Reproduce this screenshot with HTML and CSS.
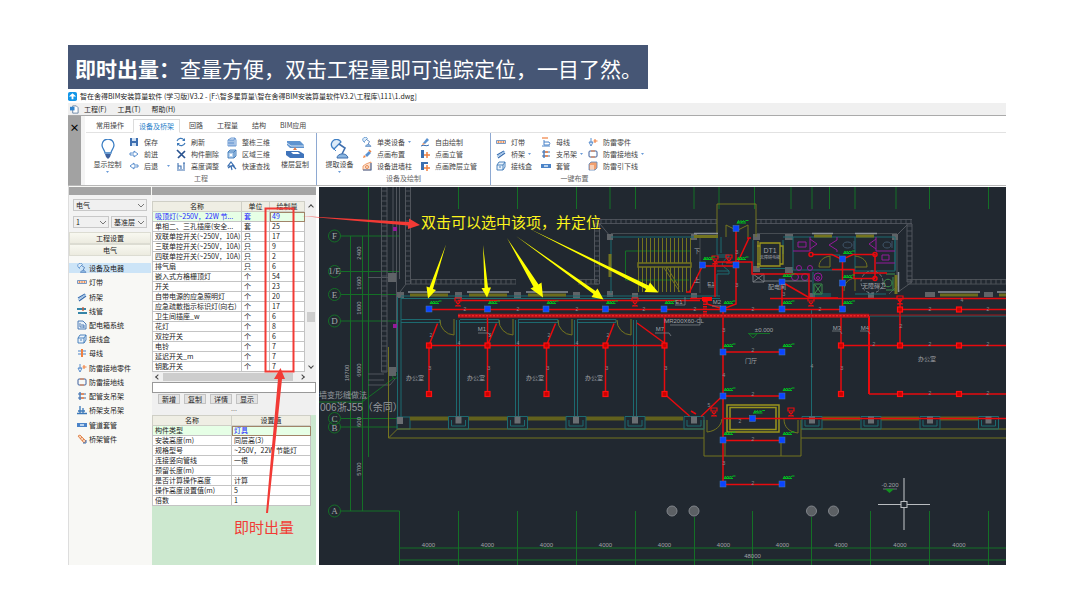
FILE: index.html
```html
<!DOCTYPE html>
<html lang="zh-CN">
<head>
<meta charset="utf-8">
<title>即时出量</title>
<link rel="stylesheet" href="styles.css">
</head>
<body>
<svg class="defs" aria-hidden="true">
  <defs>
    <symbol id="i-bulb" viewBox="0 0 20 20"><path d="M7 14c0-3-3-4-3-8a6 6 0 0 1 12 0c0 4-3 5-3 8z" fill="#fff" stroke="#3d7fc4" stroke-width="1.3"/><path d="M7 15h6l-1 3-2 2-2-2z" fill="#3c5f9c"/></symbol>
    <symbol id="i-floors" viewBox="0 0 20 20"><path d="M2 2h13l4 4v3H5L2 6z" fill="#5f93cf"/><path d="M2 4l4 3h13" fill="none" stroke="#cfe0f2"/><path d="M10 8l-2 3h4z" fill="#e08050"/><path d="M1 12h13l5 3v4H5l-4-3z" fill="#3f74bb"/><path d="M6 13h7l2 2H8z" fill="#fff"/></symbol>
    <symbol id="i-lamp" viewBox="0 0 20 20"><path d="M2 8a5 5 0 0 1 9-5L4 10z" fill="#dcebf8" stroke="#3f7fc4" stroke-width="1.3"/><path d="M9 5l6 4-3 6" fill="none" stroke="#3f6fae" stroke-width="1.6"/><path d="M7 19c0-5 10-6 11 0z" fill="#8bb6e0" stroke="#3f6fae"/><path d="M4 10l2 2" stroke="#3f7fc4"/></symbol>
    <symbol id="i-save" viewBox="0 0 10 10"><path d="M1 1h8v8H1z" fill="#3e6fb0"/><path d="M3 1h4v3H3zM3 6h4v3H3z" fill="#cfe0f3"/></symbol>
    <symbol id="i-fwd" viewBox="0 0 10 10"><path d="M1 4h4V2l4 3-4 3V6H1z" fill="#fff" stroke="#4b83c8" stroke-width=".9"/></symbol>
    <symbol id="i-back" viewBox="0 0 10 10"><path d="M9 4H5V2L1 5l4 3V6h4z" fill="#fff" stroke="#4b83c8" stroke-width=".9"/></symbol>
    <symbol id="i-refresh" viewBox="0 0 10 10"><path d="M1 4a4 4 0 0 1 7-1M9 6a4 4 0 0 1-7 1" fill="none" stroke="#3c78b8" stroke-width="1.1"/><path d="M9 1v3H6zM1 9V6h3z" fill="#3c78b8"/></symbol>
    <symbol id="i-delete" viewBox="0 0 10 10"><path d="M1 1l8 8M9 2L2 9" stroke="#28528f" stroke-width="1.7"/></symbol>
    <symbol id="i-height" viewBox="0 0 10 10"><path d="M1 9h8M2 2v6M2 5h3v3M8 2v6M7 2h2" fill="none" stroke="#3c6fb0" stroke-width="1.1"/></symbol>
    <symbol id="i-building" viewBox="0 0 10 10"><path d="M1 3l3-2h4l1 2v6H1zM1 3h6v6M7 3l1-2M3 3v6M5 3v6M1 6h6" fill="#e4effa" stroke="#4b83c8" stroke-width=".8"/></symbol>
    <symbol id="i-cube" viewBox="0 0 10 10"><path d="M1 3l2-2h6v6L7 9H1zM1 3h6v6M7 3l2-2" fill="#b9d3ee" stroke="#3c78b8" stroke-width=".9"/><path d="M3 5h2v2H3z" fill="#fff"/></symbol>
    <symbol id="i-find" viewBox="0 0 10 10"><path d="M4 1l3 4H1zM5 4l4 4M1 7l3-2 1 4" fill="none" stroke="#3c6fb0" stroke-width="1.2"/></symbol>
    <symbol id="i-dot" viewBox="0 0 10 10"><path d="M3 6l4-4 2 2-4 4z" fill="#5a91cf"/><path d="M1 9l1-3 2 2z" fill="#f08040"/><path d="M7 1l2 2" stroke="#f08040" stroke-width="1.4"/></symbol>
    <symbol id="i-wall" viewBox="0 0 10 10"><path d="M1 9V5l3-2 5-2v8z" fill="#fde2cf" stroke="#e88a52" stroke-width=".8"/><path d="M1 9h8V2" fill="none" stroke="#3c6fb0" stroke-width="1.1"/><circle cx="5" cy="6" r="1.5" fill="none" stroke="#e88a52"/></symbol>
    <symbol id="i-pen" viewBox="0 0 10 10"><path d="M3 6l4-5 2 2-4 4z" fill="#5a91cf"/><path d="M2 8l1-2 2 1z" fill="#f08040"/><path d="M1 9c3-2 5 1 8-1" fill="none" stroke="#3c6fb0"/></symbol>
    <symbol id="i-riser" viewBox="0 0 10 10"><path d="M1 1h3v8H1z" fill="#3c6fb0"/><path d="M7 3v6M4 6h6" stroke="#f08040" stroke-width="1.5"/></symbol>
    <symbol id="i-riser2" viewBox="0 0 10 10"><path d="M1 1h3v8H1zM4 1h4v2H4z" fill="#3c6fb0"/><path d="M7 4v6M4 7h6" stroke="#f08040" stroke-width="1.5"/></symbol>
    <symbol id="i-strip" viewBox="0 0 10 10"><path d="M.5 3.500h9v3h-9z" fill="#fbd3b8" stroke="#5a86bd" stroke-width=".8"/><path d="M2 5h1M4.500 5h1M7 5h1" stroke="#e07a3c" stroke-width="1.400"/></symbol>
    <symbol id="i-tray" viewBox="0 0 10 10"><path d="M1 6l7-4M2 9l7-5" stroke="#3c6fb0" stroke-width="1.400"/><path d="M1 7.500l8-5" stroke="#9cc0e6" stroke-width="1.200"/></symbol>
    <symbol id="i-box" viewBox="0 0 10 10"><path d="M1 4l2-3h6v5L7 9H1zM1 4h6v5M7 4l2-3M3 6h2" fill="#eaf3fb" stroke="#3c78b8" stroke-width=".9"/></symbol>
    <symbol id="i-bus" viewBox="0 0 10 10"><path d="M1 1h6" stroke="#f08040" stroke-width="1.200"/><path d="M3 3v5h5a2 2 0 0 0 0-3H3M1 9h8" fill="none" stroke="#4b83c8" stroke-width="1"/></symbol>
    <symbol id="i-hanger" viewBox="0 0 10 10"><path d="M3 1v8" stroke="#3c6fb0" stroke-width="1.300"/><path d="M1 3h8M1 7h8" stroke="#3c6fb0" stroke-width="1"/><path d="M4 3h3M4 7h3" stroke="#f08040" stroke-width="1.600"/></symbol>
    <symbol id="i-sleeve" viewBox="0 0 10 10"><path d="M0 3h10v4H0z" fill="#4b83c8"/><path d="M3 5h4" stroke="#d5e6f7" stroke-width="1.600"/></symbol>
    <symbol id="i-bolt" viewBox="0 0 10 10"><path d="M3 1v5M1 5l2 4 2-4z" fill="#fff" stroke="#4b83c8" stroke-width=".9"/><path d="M7 2v4M5.500 4h4" stroke="#f08040" stroke-width="1.100"/></symbol>
    <symbol id="i-ground" viewBox="0 0 10 10"><rect x="1" y="2" width="8" height="6" rx="1" fill="none" stroke="#3c5f9c"/><path d="M3 2h4M3 8h4" stroke="#f08040"/></symbol>
    <symbol id="i-down" viewBox="0 0 10 10"><path d="M1 3l2-2h6v6L7 9H1z" fill="#f3a06e" stroke="#5a86bd" stroke-width=".8"/><path d="M3 4v5M5 4v5" stroke="#fff"/></symbol>
    <symbol id="i-pipe" viewBox="0 0 10 10"><path d="M0 3h9M1 7h9" stroke="#3585a8" stroke-width="2"/><path d="M6 1v4" stroke="#d35b36" stroke-width="1.300"/></symbol>
    <symbol id="i-panel" viewBox="0 0 10 10"><path d="M1 1h5l3 3v5H1zM3 3v4h4M4 5h3v3" fill="#e8f1fa" stroke="#3c6fb0" stroke-width=".9"/></symbol>
    <symbol id="i-busbar" viewBox="0 0 10 10"><path d="M1 3h8M1 6h8" stroke="#4b83c8"/><path d="M5 1v8" stroke="#f08040" stroke-width="2"/></symbol>
    <symbol id="i-stand" viewBox="0 0 10 10"><path d="M3 1v7M6 3v5M0 8.500h10M1 6h7" fill="none" stroke="#3c78b8" stroke-width="1.300"/></symbol>
    <symbol id="i-fitting" viewBox="0 0 10 10"><path d="M1 2l2-1 6 6-2 2zM3 5l2-2M5 7l2-2" fill="#f9d1b5" stroke="#df8148" stroke-width=".9"/><path d="M6 9h3V6" fill="none" stroke="#3c6fb0"/></symbol>
  </defs>
</svg>

<main class="slide">
  <h1 class="banner"><strong>即时出量：</strong>查量方便，双击工程量即可追踪定位，一目了然。</h1>

  <section class="app">
    <header class="titlebar">
      <svg class="logo" viewBox="0 0 10 10"><rect width="10" height="10" rx="2" fill="#1296e8"/><path d="M5 1.500L9 5H6v3H4V5H1z" fill="#fff"/></svg>
      <span>智在舍得BIM安装算量软件 (学习版)V3.2 - [F:\智多星算量\智在舍得BIM安装算量软件V3.2\工程库\111\1.dwg]</span>
    </header>
    <nav class="menubar">
      <svg class="logo" viewBox="0 0 10 10"><path d="M3 1h4l2 2v6H3z" fill="#fff" stroke="#46688f" stroke-width=".8"/><path d="M0 2h5v4H0z" fill="#2f83cd"/></svg>
      <button>工程(F)</button><button>工具(T)</button><button>帮助(H)</button>
    </nav>

    <div class="ribbon">
      <button class="ribbon-close" aria-label="关闭">×</button>
      <div class="ribbon-main">
        <div class="tabs" role="tablist">
          <button role="tab">常用操作</button><button role="tab" class="active">设备及桥架</button><button role="tab">回路</button><button role="tab">工程量</button><button role="tab">结构</button><button role="tab">BIM应用</button>
        </div>
        <div class="groups">
          <section class="group">
            <div class="tools tools-project">
              <button class="big"><svg><use href="#i-bulb"/></svg>显示控制<i class="caret"></i></button>
              <div class="col">
                <button><svg><use href="#i-save"/></svg>保存</button>
                <button><svg><use href="#i-fwd"/></svg>前进</button>
                <button><svg><use href="#i-back"/></svg>后退<i class="caret wide"></i></button>
              </div>
              <div class="col">
                <button><svg><use href="#i-refresh"/></svg>刷新</button>
                <button><svg><use href="#i-delete"/></svg>构件删除</button>
                <button><svg><use href="#i-height"/></svg>高度调整</button>
              </div>
              <div class="col">
                <button><svg><use href="#i-building"/></svg>整栋三维</button>
                <button><svg><use href="#i-cube"/></svg>区域三维</button>
                <button><svg><use href="#i-find"/></svg>快速查找</button>
              </div>
              <button class="big"><svg><use href="#i-floors"/></svg>楼层复制</button>
            </div>
            <h2>工程</h2>
          </section>
          <section class="group">
            <div class="tools tools-device">
              <button class="big"><svg><use href="#i-lamp"/></svg>提取设备<i class="caret"></i></button>
              <div class="col">
                <button><svg><use href="#i-lamp"/></svg>单类设备<i class="caret"></i></button>
                <button><svg><use href="#i-dot"/></svg>点画布置</button>
                <button><svg><use href="#i-wall"/></svg>设备进墙柱</button>
              </div>
              <div class="col">
                <button><svg><use href="#i-pen"/></svg>自由绘制</button>
                <button><svg><use href="#i-riser"/></svg>点画立管</button>
                <button><svg><use href="#i-riser2"/></svg>点画跨层立管</button>
              </div>
            </div>
            <h2>设备及绘制</h2>
          </section>
          <section class="group">
            <div class="tools tools-layout">
              <div class="col">
                <button><svg><use href="#i-strip"/></svg>灯带</button>
                <button><svg><use href="#i-tray"/></svg>桥架<i class="caret"></i></button>
                <button><svg><use href="#i-box"/></svg>接线盒</button>
              </div>
              <div class="col">
                <button><svg><use href="#i-bus"/></svg>母线</button>
                <button><svg><use href="#i-hanger"/></svg>支吊架<i class="caret"></i></button>
                <button><svg><use href="#i-sleeve"/></svg>套管</button>
              </div>
              <div class="col">
                <button><svg><use href="#i-bolt"/></svg>防雷零件</button>
                <button><svg><use href="#i-ground"/></svg>防雷接地线<i class="caret"></i></button>
                <button><svg><use href="#i-down"/></svg>防雷引下线</button>
              </div>
            </div>
            <h2>一键布置</h2>
          </section>
        </div>
      </div>
    </div>

    <div class="workspace">
      <aside class="nav">
        <div class="grip"></div>
        <div class="selects">
          <select aria-label="专业" class="full"><option>电气</option></select>
          <select aria-label="楼层"><option>1</option></select>
          <select aria-label="楼层名称"><option>基准层</option></select>
        </div>
        <button class="section-btn">工程设置</button>
        <button class="section-btn">电气</button>
        <ul class="types">
          <li class="selected"><a href="#"><svg><use href="#i-lamp"/></svg>设备及电器</a></li>
          <li><a href="#"><svg><use href="#i-strip"/></svg>灯带</a></li>
          <li><a href="#"><svg><use href="#i-tray"/></svg>桥架</a></li>
          <li><a href="#"><svg><use href="#i-pipe"/></svg>线管</a></li>
          <li><a href="#"><svg><use href="#i-panel"/></svg>配电箱系统</a></li>
          <li><a href="#"><svg><use href="#i-box"/></svg>接线盒</a></li>
          <li><a href="#"><svg><use href="#i-busbar"/></svg>母线</a></li>
          <li><a href="#"><svg><use href="#i-bolt"/></svg>防雷接地零件</a></li>
          <li><a href="#"><svg><use href="#i-ground"/></svg>防雷接地线</a></li>
          <li><a href="#"><svg><use href="#i-hanger"/></svg>配管支吊架</a></li>
          <li><a href="#"><svg><use href="#i-stand"/></svg>桥架支吊架</a></li>
          <li><a href="#"><svg><use href="#i-sleeve"/></svg>管道套管</a></li>
          <li><a href="#"><svg><use href="#i-fitting"/></svg>桥架管件</a></li>
        </ul>
      </aside>

      <section class="lists">
        <div class="grip"></div>
        <div class="quantity">
          <table class="grid">
            <colgroup><col class="c-name"><col class="c-unit"><col></colgroup>
            <thead><tr><th>名称</th><th>单位</th><th>绘制量</th></tr></thead>
            <tbody>
              <tr class="current"><td>吸顶灯(~250V，22W 节...</td><td>套</td><td class="focus">49</td></tr>
              <tr><td>单相二、三孔插座(安全...</td><td>套</td><td>25</td></tr>
              <tr><td>双联单控开关(~250V，10A)</td><td>只</td><td>17</td></tr>
              <tr><td>三联单控开关(~250V，10A)</td><td>只</td><td>9</td></tr>
              <tr><td>四联单控开关(~250V，10A)</td><td>只</td><td>2</td></tr>
              <tr><td>排气扇</td><td>只</td><td>6</td></tr>
              <tr><td>嵌入式方格栅顶灯</td><td>个</td><td>54</td></tr>
              <tr><td>开关</td><td>个</td><td>23</td></tr>
              <tr><td>自带电源的应急照明灯</td><td>个</td><td>20</td></tr>
              <tr><td>应急疏散指示标识灯(向右)</td><td>个</td><td>17</td></tr>
              <tr><td>卫生间插座_w</td><td>个</td><td>6</td></tr>
              <tr><td>花灯</td><td>个</td><td>8</td></tr>
              <tr><td>双控开关</td><td>个</td><td>6</td></tr>
              <tr><td>电铃</td><td>个</td><td>7</td></tr>
              <tr><td>延迟开关_m</td><td>个</td><td>7</td></tr>
              <tr><td>钥匙开关</td><td>个</td><td>7</td></tr>
            </tbody>
          </table>
          <div class="vscroll"><i class="chev up"></i><i class="thumb"></i><i class="chev down"></i></div>
        </div>
        <div class="hscroll"><i class="chev left"></i><i class="thumb"></i><i class="chev right"></i></div>
        <input class="filter" type="text" aria-label="筛选">
        <div class="actions"><button>新增</button><button>复制</button><button>详情</button><button>显示</button></div>
        <div class="splitter">...</div>
        <div class="props">
          <table class="grid">
            <colgroup><col class="c-half"><col></colgroup>
            <thead><tr><th>名称</th><th>设置值</th></tr></thead>
            <tbody>
              <tr class="current"><td class="plain">构件类型</td><td class="focus">灯具</td></tr>
              <tr><td>安装高度(m)</td><td>同层高(3)</td></tr>
              <tr><td>规格型号</td><td>~250V，22W 节能灯</td></tr>
              <tr><td>连接竖向管线</td><td>一根</td></tr>
              <tr><td>预留长度(m)</td><td></td></tr>
              <tr><td>是否计算操作高度</td><td>计算</td></tr>
              <tr><td>操作高度设置值(m)</td><td>5</td></tr>
              <tr><td>倍数</td><td>1</td></tr>
            </tbody>
          </table>
        </div>
      </section>

      <div class="drawing">
        <svg viewBox="319 187 687 378" preserveAspectRatio="xMinYMin slice">
          <defs>
            <pattern id="bh" x="0" y="219" width="5" height="5" patternUnits="userSpaceOnUse"><path d="M0 .5h5M0 4.500h5M1 0v5" stroke="#50555c" stroke-width=".9" fill="none"/></pattern>
            <pattern id="bh2" x="0" y="279" width="5" height="5.500" patternUnits="userSpaceOnUse"><path d="M0 .5h5M0 5h5M1 0v5" stroke="#50555c" stroke-width=".9" fill="none"/></pattern>
            <pattern id="bv" x="0" y="0" width="6" height="5" patternUnits="userSpaceOnUse"><path d="M0 1h6" stroke="#50555c" stroke-width=".9"/></pattern>
            <g id="lamp"><path d="M1-5l1.500-3 .5 2 2-2 .5 2 2-2 .5 1.500 2-1.500h2.500M1-5.500h9" fill="none" stroke="#00c81e" stroke-width=".9"/><rect x="-3" y="-3" width="6" height="6" fill="#0b45ff" stroke="#4a78b0" stroke-width=".5"/></g>
            <g id="sq"><rect x="-2.500" y="-2.500" width="5" height="5" fill="#c00" stroke="#ff1010" stroke-width="1.200"/></g>
            <g id="em"><path d="M-3-5h6v3h-6zM-2-1l4 4M2-1l-4 4M-3 3h6" fill="none" stroke="#e80c10" stroke-width="1.200"/></g>
            <g id="door"><path d="M0 0a14.500 14.500 0 0 0 14 15V-1" fill="none" stroke="#74741f"/></g>
            <g id="win"><path d="M0 0h42" stroke="#8a9098" stroke-width="1.600"/><path d="M2 3h38" stroke="#6c6b1c" stroke-width="3"/></g>
            <g id="bay"><path d="M-10-3.500h20V9h-20zM-7 0v6H7V0" fill="none" stroke="#1c6a70"/><rect x="-3" y="-3.500" width="6" height="7" fill="#6a6e72"/></g>
            <g id="band"><path d="M0 0h38" stroke="#62611d" stroke-width="4"/></g>
          </defs>

          <g class="green">
            <path d="M350.500 236V511M362.500 236V511M368.500 187V457M341 236h58M341 271.500h58M341 294.500h58M341 321h58M341 418.500h57M341 427h57M341 511h58.500V565"/>
            <path d="M458.500 511v54M517.500 511v54M576.500 511v54M635.500 511v54M694.500 517v48M752.500 511v54M811.500 517v48M870.500 511v54M929.500 511v54M988.500 511v54M399 548H1006M399 560H1006"/>
            <path d="M458.500 187v22M517.500 187v22M576.500 187v22M610 187v22M635.500 187v22M694 187v22M719 187v22M754.500 187v22M791 187v22M812 187v22M829.500 187v22M855 187v22M896 187v22M929.500 187v22M988.500 187v22"/>
            <path d="M319 402h43l32-24M691 251h-65.500v29H689"/>
            <circle cx="334.500" cy="236" r="6"/><circle cx="334.500" cy="271.500" r="6"/><circle cx="334.500" cy="294.500" r="6"/><circle cx="334.500" cy="321" r="6"/><circle cx="334.500" cy="418.500" r="6"/><circle cx="334.500" cy="427" r="6"/><circle cx="334.500" cy="511" r="6"/><circle cx="395" cy="376" r="2.500"/>
            <path d="M749 334l4 4 4-4zM748 333.500h22"/>
          </g>

          <g fill="url(#bv)" stroke="#50555c">
            <path d="M381.500 187h5.500v185h-5.500zM405.500 187h5v97h-5zM594.500 224h5v60h-5zM907 224h5v58h-5z"/>
          </g>
          <path d="M411 279h105v5.500H411zM578 279h20v5.500H578zM907 279h99v5.500H907z" fill="url(#bh2)"/>
          <path d="M595 219h122v5H595zM756 219h156v5H756z" fill="url(#bh)"/>
          <g fill="none" stroke="#50555c">
            <path d="M393 187v92M396.500 187v185M399.500 187v92M368 277.500h20M600 224l10 12M907 225l-10 10v51l-8 8M898 292l14-10M368 374h16M368 380h16M368 385h22l5-6M397 296l9-12"/>
            <path d="M611 233.500h86M757 233.500h140M700 236v57" stroke-width=".8"/>
          </g>
          <g fill="#5f6367">
            <rect x="388" y="273" width="8" height="9"/><rect x="388" y="367" width="8" height="9"/><rect x="397" y="292" width="7" height="6"/><rect x="455" y="292" width="7" height="6"/><rect x="514" y="292" width="7" height="6"/><rect x="573" y="292" width="7" height="6"/><rect x="607" y="234" width="6" height="6"/><rect x="607" y="291" width="6" height="6"/><rect x="632" y="293" width="6" height="6"/><rect x="691" y="234" width="6" height="6"/><rect x="691" y="293" width="6" height="6"/><rect x="753" y="234" width="7" height="6"/><rect x="753" y="266" width="7" height="6"/><rect x="785" y="234" width="8" height="6"/><rect x="785" y="267" width="8" height="6"/><rect x="892" y="234" width="6" height="6"/><rect x="809" y="293" width="6" height="6"/><rect x="868" y="293" width="6" height="5"/><rect x="925" y="292" width="10" height="5"/><rect x="984" y="292" width="9" height="5"/>
          </g>
          <path d="M393 227h4v4h-4zM393 324h4v4h-4z" fill="#941a9a"/>

          <g fill="none" stroke="#1c6a70">
            <path d="M397.500 297v123M401 297v123M401 296h319M401 298.500h319M456.500 320v100M459.500 320v100M515.500 320v100M518.500 320v100M574.500 320v100M577.500 320v100M633.500 320v100M636.500 320v100M811.500 310v107"/>
            <path d="M401 319.500h39v3h-39M460 319.500h39v3h-39M518 319.500h40v3h-40M577 319.500h39v3h-39M397 417h13v12h-13z"/>
            <path d="M611 237h106v18h12v2h-12M611 240v53M717 296v-22h12v-3h-12M721 237v16M783 237h112v34M783 240v14M793 237v33h62M813 272v22h18M855 237v34M855 271h40M855 294h31M895 240v30M760 268.500h25M753 240v26M830 255h10M813 296h18M870 316h136"/>
            <path d="M729 257c-6 3-8 7-6 9l6 5"/>
          </g>

          <g fill="none" stroke="#74741f">
            <use href="#win" x="408" y="292"/><use href="#win" x="467" y="292"/><use href="#win" x="526" y="292"/><use href="#win" x="938" y="292"/><use href="#win" x="997" y="292"/>
            <use href="#door" x="440" y="320"/><use href="#door" x="499" y="320"/><use href="#door" x="558" y="320"/><use href="#door" x="617" y="320"/>
            <path d="M717 237v-33h39v33M726 237v-12l10 5M748 237v-12l-10 5"/>
            <path d="M638.500 238v54M642.500 238v54M646.500 238v54M650.500 238v54M654.500 238v54M658.500 238v54M662.500 238v54M666.500 238v54M670.500 238v54M674.500 238v54M678.500 238v54M682.500 238v54M686.500 238v54M690.500 238v54M664 268l16 24M667 267l12 20"/>
            <path d="M638 263h53v4h-53z" fill="#212830" stroke-width="1.500"/>
            <path d="M610 254v23M896 275v19" stroke-width="3"/>
            <path d="M694 236.500h24M814 236h18M856 236h18" stroke-width="3"/>
            <path d="M760 243h20v23h-20zM758 241v27M780 246h3v18h-3M757 246h3v18h-3" stroke-width="1.300" stroke="#9a941d"/>
            <path d="M819 267c0-7 5-10 11-11v11zM855 256c8 1 12 5 12 11h-12M844 291c0-8 4-12 11-13v13"/>
            <path d="M388.500 347v91H704M388.500 438l9-9H704M704 420v36h97v-36M801 429h205M801 438h205M707 420v12c9-1 14-6 15-13M781 438v18M725 438v18M784 419c0 8 5 13 14 14v-13"/>
            <path d="M727 405h52v27h-52zM730 407.500h46v22h-46z" stroke-width="1.500" stroke="#9a941d"/>
          </g>
          <path d="M812 233.500h21M855 233.500h22M694 233.500h24M898.500 272v20" stroke="#8a9098" stroke-width="1.500"/>
          <use href="#band" x="410" y="418.500"/><use href="#band" x="469" y="418.500"/><use href="#band" x="528" y="418.500"/><use href="#band" x="586" y="418.500"/><use href="#band" x="645" y="418.500"/><use href="#band" x="822" y="418.500"/><use href="#band" x="881" y="418.500"/><use href="#band" x="940" y="418.500"/>
          <rect x="397" y="417" width="6" height="7" fill="#6a6e72"/>
          <use href="#bay" x="458.500" y="420"/><use href="#bay" x="517.500" y="420"/><use href="#bay" x="576" y="420"/><use href="#bay" x="635" y="420"/><use href="#bay" x="694" y="420"/><use href="#bay" x="812" y="420"/><use href="#bay" x="871" y="420"/><use href="#bay" x="930" y="420"/><use href="#bay" x="988.500" y="420"/>

          <g fill="none" stroke="#941a9a">
            <path d="M793 251h17v-14M810 239l7 5-7 5M837 237v3l-8 5 8 5v2M798 242h8v5h-8zM876 237v14h19M876 239l-7 5 7 5M882 255h7v5h-7zM876 263h19"/>
            <circle cx="799" cy="268" r="2.500"/><circle cx="810" cy="268" r="2.500"/><circle cx="795" cy="277" r="3.500"/><circle cx="805" cy="277" r="3.500"/><circle cx="818" cy="277" r="4"/><circle cx="818" cy="278" r="1.500"/>
          </g>
          <g fill="none" stroke="#3f556a"><path d="M854 241v8M843 245c0-4 9-4 9 0s-9 4-9 0M892 241v7M883 245c0-4 8-4 8 0s-8 4-8 0"/></g>
          <g fill="none" stroke="#3d8f4b"><path d="M814 284h8v10h-8zM815 285l6 8M821 285l-6 8M893 277v12M884 283c0-5 8-5 8 0s-8 5-8 0M886 274h9M886 290h9"/></g>
          <circle cx="872" cy="282" r="11" fill="none" stroke="#7b8086" stroke-dasharray="3 2"/>
          <path d="M753 274h11v8h-11zM753 274l11 8M764 274l-11 8M764 281h48" fill="none" stroke="#7b8086" stroke-width=".9"/>

          <g class="red">
            <path d="M429 309.500H842M458 300.500H700M690 298.500H712M770 298.500h236M429 345.500H664.500M841 345.500h165M900 309.500h106M869 394h137M724 418.500h282"/>
            <path d="M429 394v-48.500l8.500-22M487.500 394V316M487.500 345.500l9-22M546.500 394v-48.500l9-22M605.500 394v-48.500l8.500-22M664.500 316v78l25 22M664.500 343L637 323M841 316v78M900 298v47"/>
            <path d="M869 316v78" stroke-width="2"/>
            <path d="M723 309v175M723 352h59M723 396h59M723 440.500h59M723 484.500h59M723 395.500l-22 21M736 228v76l-13 5-16-5v-6M749 238l-13 28H702.500l-13 26M715 262h37v12h57v24M715 262v35M782 282v27M782 282l26 15M842.500 259v50M812 254.500h20l10 5 11-5h22v24M832 269.500h22v9h21M808 298h30M854 273h33"/>
            <path d="M686 292h5M747 238h4M696 414l-5-3"/>
          </g>
          <path d="M458 315.800h411" stroke="#b81217" stroke-width="4"/>
          <path d="M458 315.800h411" stroke="#f33" stroke-width="1" stroke-dasharray="2 1.500"/>
          <path d="M869 315h137" stroke="#a31519" stroke-width="1"/>
          <path d="M705 301v14" stroke="#e80c10" stroke-width="4" stroke-dasharray="1.500 1"/>
          <path d="M702 297h10v4h-10z" fill="#ff0808"/>
          <circle cx="811" cy="254.500" r="2" class="red"/><circle cx="875" cy="254.500" r="2" class="red"/><circle cx="875" cy="278.500" r="2" class="red"/>
          <use href="#em" x="458" y="303"/><use href="#em" x="635" y="303"/><use href="#em" x="715" y="261"/><use href="#em" x="729" y="260"/><use href="#em" x="811" y="303"/><use href="#em" x="900" y="301"/><use href="#em" x="714" y="413"/><use href="#em" x="791" y="413"/>
          <use href="#sq" x="429" y="345.500"/><use href="#sq" x="487.500" y="345.500"/><use href="#sq" x="546.500" y="345.500"/><use href="#sq" x="605.500" y="345.500"/><use href="#sq" x="664.500" y="345.500"/><use href="#sq" x="841" y="345.500"/><use href="#sq" x="900" y="345.500"/><use href="#sq" x="959" y="345.500"/>
          <use href="#sq" x="429" y="394"/><use href="#sq" x="487.500" y="394"/><use href="#sq" x="546.500" y="394"/><use href="#sq" x="605.500" y="394"/><use href="#sq" x="664.500" y="394"/><use href="#sq" x="841" y="394"/><use href="#sq" x="900" y="394"/><use href="#sq" x="959" y="394"/><use href="#sq" x="900" y="309.500"/><use href="#sq" x="959" y="309.500"/>
          <use href="#lamp" x="429" y="309"/><use href="#lamp" x="487.500" y="309"/><use href="#lamp" x="546" y="309"/><use href="#lamp" x="605.500" y="309"/><use href="#lamp" x="664" y="309"/><use href="#lamp" x="723" y="309"/><use href="#lamp" x="782" y="309"/><use href="#lamp" x="842.500" y="309"/>
          <use href="#lamp" x="736" y="228.500"/><use href="#lamp" x="702.500" y="265"/><use href="#lamp" x="736" y="265"/><use href="#lamp" x="782" y="282"/><use href="#lamp" x="842.500" y="259"/><use href="#lamp" x="842.500" y="283"/><use href="#lamp" x="723" y="352"/><use href="#lamp" x="782" y="352"/><use href="#lamp" x="723" y="396"/><use href="#lamp" x="782" y="396"/><use href="#lamp" x="752.500" y="418.500"/><use href="#lamp" x="723" y="440"/><use href="#lamp" x="782" y="440"/><use href="#lamp" x="723" y="484"/><use href="#lamp" x="782" y="484"/>

          <g fill="#5c6064" stroke="#80848a"><circle cx="672" cy="511" r="5"/><circle cx="694" cy="511" r="5"/><circle cx="811.500" cy="511" r="5"/><circle cx="833.500" cy="511" r="5"/></g>

          <g class="axis"><text x="334.500" y="239">F</text><text x="334.500" y="274">1/E</text><text x="334.500" y="298">E</text><text x="334.500" y="324">D</text><text x="334.500" y="422">C</text><text x="334.500" y="431">B</text><text x="334.500" y="514">A</text></g>
          <g class="dim">
            <text x="428.500" y="546.500">4000</text><text x="487.500" y="546.500">4000</text><text x="546.500" y="546.500">4000</text><text x="605.500" y="546.500">4000</text><text x="664.500" y="546.500">4000</text><text x="723.500" y="546.500">4000</text><text x="782.500" y="546.500">4000</text><text x="841" y="546.500">4000</text><text x="900" y="546.500">4000</text><text x="959" y="546.500">4000</text><text x="752.500" y="558">48000</text>
            <text transform="translate(361 253) rotate(-90)">2400</text><text transform="translate(361 283) rotate(-90)">1600</text><text transform="translate(361 308) rotate(-90)">1800</text><text transform="translate(349 373) rotate(-90)">18700</text><text transform="translate(361 370) rotate(-90)">6800</text><text transform="translate(361 422) rotate(-90)">600</text><text transform="translate(361 469) rotate(-90)">5700</text>
            <text x="764" y="332">±0.000</text><text x="890" y="487">-0.200</text>
            <text x="415" y="380">办公室</text><text x="476" y="380">办公室</text><text x="535" y="380">办公室</text><text x="594" y="380">办公室</text><text x="927" y="361">办公室</text><text x="751" y="363">门厅</text><text x="777" y="289">配电间</text><text x="874" y="288">无障碍卫</text>
            <text x="697" y="253">下</text><text x="697" y="282">上</text><text x="679" y="304">E1</text><text x="711" y="286">E1</text><text x="717" y="304">M2</text><text x="684" y="323">MR200X60-CL</text><text x="660" y="331">M7</text><text x="482" y="331">M1</text><text x="837" y="330">M3</text><text x="865" y="330">M4</text><text class="lift" x="770" y="253">DT1</text>
            <text class="lift-sub" x="770" y="259">无障碍电梯</text>
          </g>
          <path d="M670 325h30v-8M655 333h14l2 3M478 333h10l3 3M832 331h8l2 3M860 331h8l2 3M675 305h10v-8M708 287h6M712 306h9M883 489h14" fill="none" stroke="#7b8086" stroke-width=".8"/>
          <g class="num">
            <text x="465" y="311">2</text><text x="518" y="311">2</text><text x="577" y="311">2</text><text x="644" y="311">2</text><text x="695" y="311">2</text><text x="753" y="311">2</text><text x="820" y="311">2</text><text x="930" y="311">2</text><text x="988" y="311">2</text>
            <text x="430" y="370">3</text><text x="489" y="370">3</text><text x="548" y="370">3</text><text x="607" y="370">3</text><text x="666" y="370">3</text><text x="842" y="370">3</text><text x="431" y="337">2</text><text x="490" y="337">2</text><text x="549" y="337">2</text><text x="608" y="337">2</text>
            <text x="459" y="345">4</text><text x="518" y="345">4</text><text x="577" y="345">4</text><text x="753" y="352">2</text><text x="753" y="396">2</text><text x="753" y="441">2</text><text x="753" y="485">2</text><text x="724" y="332">3</text><text x="724" y="377">4</text><text x="724" y="465">3</text><text x="874" y="346">2</text><text x="930" y="346">2</text><text x="988" y="346">2</text><text x="930" y="395">2</text><text x="988" y="395">2</text><text x="962" y="302">4</text><text x="901" y="328">2</text><text x="737" y="254">3</text><text x="737" y="287">3</text><text x="784" y="296">3</text><text x="709" y="407">5</text><text x="740" y="423">2</text><text x="812" y="368">4</text>
          </g>
          <text class="note note-sm" x="319" y="398">墙变形缝做法</text>
          <text class="note" x="320" y="411">006浙J55（余同）</text>
          <path d="M885 489h9l-4.500 4z" fill="#12921f"/>
          <path d="M878 504.500h23M907 504.500h23M904 478v23M904 507v23M901 501.500h6v6h-6z" fill="none" stroke="#b9bcc0" stroke-width="1.100"/>

          <g fill="#ff0">
            <path d="M446 244.500L433 289l3 1-8 8.500-1.500-12 3 1z"/>
            <path d="M483 245l1.500 43h-3l5.500 9.500 4-10h-3z"/>
            <path d="M507 238l26.500 49-3 1.500 12.500 9-1.500-15-3 2z"/>
            <path d="M516 236l77.500 58-2 3 12 2.500-6-11-2 2.500z"/>
            <path d="M530 229l116 60-1.500 3 14 .5-8.500-10-1.500 3z"/>
          </g>
          <text class="callout-yellow" x="421" y="228">双击可以选中该项，并定位</text>
        </svg>
      </div>

      <svg class="callouts" viewBox="0 0 360 379">
        <rect x="197.500" y="22.500" width="28" height="163" fill="none" stroke="#f23a35" stroke-width="2"/>
        <path d="M198 327l12-134h-4l6.500-11 4.500 11h-3l-14 134zM233 30l108 6v-3.500l11 6.500-12 4v-3.500z" fill="#f23a35"/>
        <text x="166" y="347">即时出量</text>
      </svg>
    </div>
  </section>
</main>
</body>
</html>
```

FILE: styles.css
```css
* { box-sizing: border-box; }

body {
  margin: 0;
  background: #fff;
  color: #222;
  font: 7px/10px "Noto Sans CJK SC", "Noto Sans", sans-serif;
}

button, select, input { font: inherit; color: inherit; margin: 0; }
button { border: 0; background: none; padding: 0; white-space: nowrap; }
h1, h2, ul { margin: 0; padding: 0; font-weight: 400; }
.defs { position: absolute; width: 0; height: 0; }

.slide { padding: 45px 74px 48px 68px; }

.banner {
  width: fit-content;
  padding: 2px 6px 0 7px;
  background: #465675;
  color: #fff;
  font-size: 21px;
  line-height: 42px;
  white-space: nowrap;
}
.banner strong { font-weight: 700; }

/* window chrome */
.titlebar {
  display: flex;
  align-items: center;
  gap: 3px;
  height: 14px;
  white-space: nowrap;
}
.menubar {
  display: flex;
  align-items: center;
  gap: 11px;
  height: 12px;
  padding-left: 2px;
  background: #f0f0f0;
}
.menubar .logo { margin-right: -6px; }
.logo { width: 9px; height: 9px; }

.ribbon {
  display: flex;
  height: 71px;
  border-top: 1px solid #aaa;
  border-bottom: 1px solid #b8b8b8;
}
.ribbon-close {
  width: 13px;
  padding-top: 7px;
  background: #a2a2a2;
  color: #000;
  font-size: 10px;
  font-weight: 700;
  display: flex;
  justify-content: center;
}
.ribbon-main { flex: 1; padding-left: 5px; background: linear-gradient(90deg, #f4f4f4 4px, #fff 4px); }
.tabs {
  display: flex;
  align-items: flex-end;
  gap: 4px;
  height: 17px;
  border-bottom: 1px solid #e2e2e2;
  color: #444;
}
.tabs button { height: 14px; padding: 0 5px; margin-left: 5px; }
.tabs button + button { margin-left: 0; }
.tabs button:nth-child(n+3) { padding: 0 5px; }
.tabs .active {
  margin-bottom: -1px;
  border: 1px solid #dcdcdc;
  border-bottom-color: #fff;
  background: #fff;
  color: #2a7fc9;
}

.groups { display: flex; height: 52px; }
.group { border-right: 1px solid #8ea9d2; color: #444; }
.group:last-child { border: 0; }
.group h2 { font-size: 7px; line-height: 12px; text-align: center; color: #666; }
.tools { display: grid; height: 39px; padding-top: 3px; }
.tools-project { grid-template-columns: 43px 47px 51px 47px 42px; }
.tools-device { grid-template-columns: 45px 58px 70px; }
.tools-layout { grid-template-columns: 45px 47px 70px; padding-left: 5px; }
.col { display: grid; grid-auto-rows: 12px; }
.col button { display: flex; align-items: center; gap: 5px; }
.col svg { width: 10px; height: 10px; }
.big { display: flex; flex-direction: column; align-items: center; padding-top: 3px; }
.big svg { width: 20px; height: 20px; }
.caret {
  width: 3px;
  height: 2px;
  background: #6a9bd8;
  clip-path: polygon(0 0, 100% 0, 50% 100%);
}
.col .caret { margin-left: -2px; }
.col .wide { margin-left: 4px; }
.big .caret { margin-top: 2px; }

/* working area */
.workspace { position: relative; display: flex; min-height: 379px; }
.grip { height: 8px; background: #a4a4a4; }

.nav { width: 84px; padding: 1px 1px 0 0; border-left: 1px solid #ddd; background: #f8f8f5; }
.selects {
  display: grid;
  grid-template-columns: 36px 36px;
  gap: 5px 2px;
  padding: 4px 4px;
  background: #f3f3f3;
}
.selects .full { grid-column: 1 / 3; }
.selects select {
  appearance: none;
  width: 100%;
  height: 12px;
  padding: 0 2px;
  border: 1px solid #c8c8c8;
  border-radius: 0;
  color: #222;
  background:
    linear-gradient(-45deg, transparent 40%, #777 40% 60%, transparent 60%) right 5px center / 3px 3px no-repeat,
    linear-gradient(45deg, transparent 40%, #777 40% 60%, transparent 60%) right 5px center / 3px 3px no-repeat,
    #f0f0f0;
  background-position: right 2px center, right 5px center, 0 0;
  line-height: 10px;
}
.section-btn {
  display: block;
  width: 100%;
  height: 12px;
  border: 1px solid #dcdcd2;
  background: linear-gradient(#f8f8f0, #ecebe0);
}
.types {
  display: grid;
  grid-template-rows: repeat(13, 1fr);
  height: 185px;
  margin-top: 5px;
  list-style: none;
}
.types a { display: flex; align-items: center; gap: 2px; height: 10px; padding-left: 8px; color: inherit; text-decoration: none; }
.types li { display: grid; align-items: center; }
.types svg { width: 10px; height: 10px; }
.types .selected a { background: #cce4f7; }

.lists { display: flex; flex-direction: column; width: 164px; padding-top: 1px; background: #f0f0f0; }
.quantity { display: flex; margin-top: 6px; }
.grid {
  border-collapse: collapse;
  table-layout: fixed;
  width: 153px;
  background: #fff;
  line-height: 9px;
}
.c-name { width: 89px; }
.c-unit { width: 28px; }
.c-half { width: 79px; }
.grid th { height: 10px; padding: 0; border: 1px solid #cfcfc6; background: #efeee4; font-weight: 400; }
.grid td {
  height: 9px;
  padding: 0 0 0 2px;
  border: 1px solid #c4c4c4;
  white-space: nowrap;
}
.grid .current td { background: #e6ffe6; color: #22f; }
.grid .current .plain { color: #222; }
.grid .current .focus { outline: 1px solid #a08468; outline-offset: -1px; }

.vscroll { display: flex; flex: 1; flex-direction: column; align-items: center; justify-content: space-between; padding: 4px 0; }
.vscroll .thumb { width: 8px; height: 10px; margin-top: 60px; background: #cdcdcd; }
.hscroll { display: flex; align-items: center; height: 10px; padding: 0 12px 0 4px; }
.hscroll .thumb { width: 130px; height: 8px; margin: 0 auto 0 3px; background: #cdcdcd; }
.chev { width: 4px; height: 4px; border: solid #444; border-width: 1px 0 0 1px; }
.up { transform: rotate(45deg); }
.down { transform: rotate(225deg); }
.left { transform: rotate(-45deg); }
.right { transform: rotate(135deg); }
.filter { width: 100%; height: 11px; padding: 0 3px; border: 1px solid #999; background: #fff; }
.actions { display: flex; gap: 4px; padding: 1px 6px 0; }
.actions button { width: 22px; height: 10px; border: 1px solid #c2c2c2; background: #e3e3e3; line-height: 8px; }
.splitter { height: 11px; line-height: 8px; text-align: center; color: #777; }
.props { flex: 1; background: #cce8cf; }
.props .grid { width: 159px; }

/* drawing canvas */
.drawing { flex: 1; min-width: 0; margin-top: 1px; margin-left: 3px; background: #212830; }
.drawing svg { display: block; width: 100%; height: 100%; }
.green { fill: none; stroke: #147026; stroke-width: 1; }
.red { fill: none; stroke: #e80a0e; stroke-width: 1.5; }
.axis { font: 9px "Liberation Serif", serif; fill: #a5a8ac; text-anchor: middle; }
.dim { font: 6px "Liberation Sans", "Noto Sans CJK SC", sans-serif; fill: #a0a3a7; text-anchor: middle; }
.dim .lift { font-size: 7px; }
.dim .lift-sub { font-size: 4px; }
.num { font: 5px "Liberation Sans", sans-serif; fill: #8a8e93; text-anchor: middle; }
.note { font: 10px "Liberation Sans", "Noto Sans CJK SC", sans-serif; fill: #94989d; }
.note-sm { font-size: 8px; }
.callout-yellow { font: 15px "Noto Sans CJK SC", sans-serif; fill: #fdf51c; }

.callouts { position: absolute; left: 0; top: 0; width: 360px; height: 379px; pointer-events: none; }
.callouts text { font: 15px "Noto Sans CJK SC", sans-serif; fill: #f23a35; }
```
